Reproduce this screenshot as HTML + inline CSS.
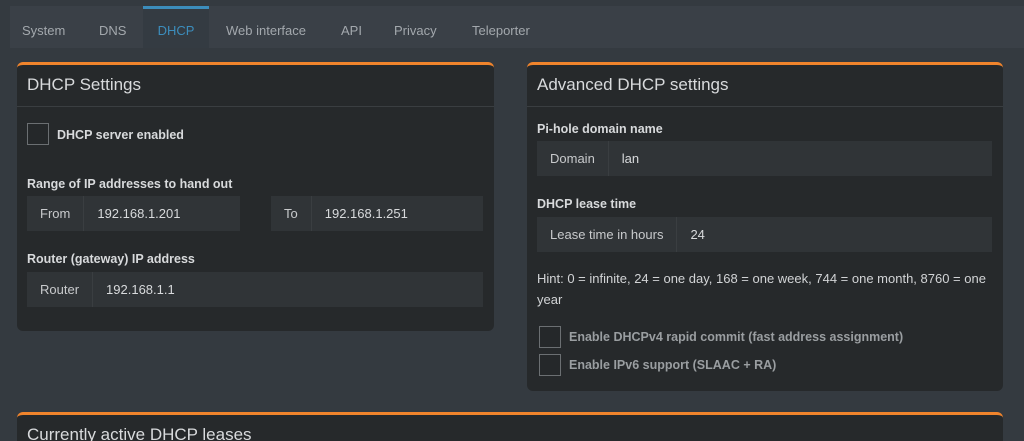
<!DOCTYPE html>
<html style="height:441px;overflow:hidden"><head><style>
*{box-sizing:border-box;margin:0;padding:0}
body{width:1024px;height:441px;overflow:hidden;background:#343a40;font-family:"Liberation Sans",sans-serif;color:#d2d4d6;font-size:13px;position:relative}
.tabs{position:absolute;left:10px;top:6px;right:0;height:42px;background:#3a4047}
.tab{position:absolute;top:0;height:42px;line-height:50px;color:#a3a8ad;font-size:13px}
.tab.act{background:#343b42;border-top:3px solid #3c8dbc;color:#3c8dbc;line-height:44px;text-align:center}
.box{position:absolute;background:#26292b;border-top:3px solid #f0842c;border-radius:6px}
.hdr{height:42px;border-bottom:1px solid #3a3e41;font-size:17px;padding:10px 10px;color:#d8dadc}
.ab{position:absolute}
.lbl{position:absolute;font-weight:bold;font-size:12.5px;color:#d8dadc}
.grp{position:absolute;height:35px;background:#303437;display:flex}
.ad{height:35px;line-height:35px;padding:0 13px;border-right:1px solid #3a3e41;color:#c8cacc}
.val{line-height:35px;padding-left:13px;color:#d8dadc}
.cb{position:absolute;width:22px;height:22px;border:1px solid #6b6f72;background:#25282a}
.cbl{position:absolute;font-weight:bold;font-size:12.5px}
</style></head><body>
<div class="tabs">
<div class="tab" style="left:12px">System</div>
<div class="tab" style="left:89px">DNS</div>
<div class="tab act" style="left:133px;width:66px">DHCP</div>
<div class="tab" style="left:216px">Web interface</div>
<div class="tab" style="left:331px">API</div>
<div class="tab" style="left:384px">Privacy</div>
<div class="tab" style="left:462px">Teleporter</div>
</div>

<div class="box" style="left:17px;top:62px;width:477px;height:269px">
<div class="hdr">DHCP Settings</div>
<div class="cb" style="left:10px;top:58px"></div>
<div class="cbl" style="left:40px;top:63px;color:#d8dadc">DHCP server enabled</div>
<div class="lbl" style="left:10px;top:112px">Range of IP addresses to hand out</div>
<div class="grp" style="left:10px;top:131px;width:213px"><div class="ad">From</div><div class="val">192.168.1.201</div></div>
<div class="grp" style="left:254px;top:131px;width:212px"><div class="ad">To</div><div class="val">192.168.1.251</div></div>
<div class="lbl" style="left:10px;top:187px">Router (gateway) IP address</div>
<div class="grp" style="left:10px;top:207px;width:456px"><div class="ad">Router</div><div class="val">192.168.1.1</div></div>
</div>

<div class="box" style="left:527px;top:62px;width:476px;height:329px">
<div class="hdr">Advanced DHCP settings</div>
<div class="lbl" style="left:10px;top:57px">Pi-hole domain name</div>
<div class="grp" style="left:10px;top:76px;width:455px"><div class="ad">Domain</div><div class="val">lan</div></div>
<div class="lbl" style="left:10px;top:132px">DHCP lease time</div>
<div class="grp" style="left:10px;top:152px;width:455px"><div class="ad">Lease time in hours</div><div class="val">24</div></div>
<div class="ab" style="left:10px;top:203px;width:450px;line-height:21px;font-size:13px">Hint: 0 = infinite, 24 = one day, 168 = one week, 744 = one month, 8760 = one year</div>
<div class="cb" style="left:12px;top:261px"></div>
<div class="cbl" style="left:42px;top:265px;color:#9a9ea1">Enable DHCPv4 rapid commit (fast address assignment)</div>
<div class="cb" style="left:12px;top:289px"></div>
<div class="cbl" style="left:42px;top:293px;color:#9a9ea1">Enable IPv6 support (SLAAC + RA)</div>
</div>

<div class="box" style="left:17px;top:412px;width:986px;height:29px;border-bottom-left-radius:0;border-bottom-right-radius:0">
<div style="font-size:17px;padding:10px 10px;color:#d8dadc">Currently active DHCP leases</div>
</div>
</body></html>
